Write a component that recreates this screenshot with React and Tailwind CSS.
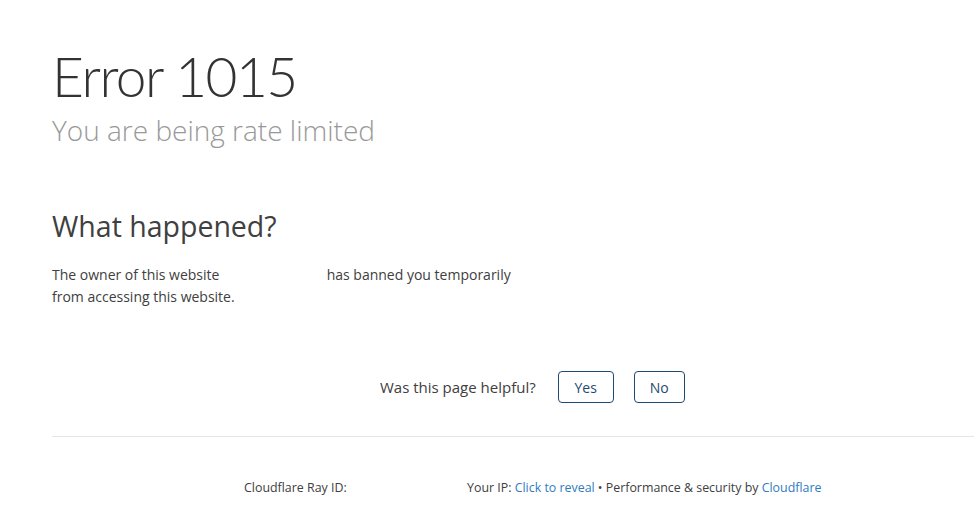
export default function App() {
  return (
    <div className="min-h-screen bg-white text-[#404040]" style={{ fontFamily: '"Open Sans", "Noto Sans", sans-serif' }}>
      {/* Header */}
      <div className="pl-[52px] pt-[40px]">
        <h1 className="text-[55px] leading-[72px] font-light tracking-[-1.5px] text-[#333]" style={{ fontFamily: 'Lato, "Open Sans", sans-serif' }}>
          Error 1015
        </h1>
        <h2 className="text-[28px] leading-[36px] font-light text-[#999]">You are being rate limited</h2>
      </div>

      {/* What happened */}
      <div className="pl-[52px] pt-[58px]">
        <h2 className="text-[28.5px] leading-[40px] font-normal text-[#404040]">What happened?</h2>
        <p className="mt-[18px] text-[14px] leading-[22px] text-[#404040]">
          The owner of this website <span className="inline-block w-[100px]" /> has banned you temporarily
          <br />
          from accessing this website.
        </p>
      </div>

      {/* Feedback */}
      <div className="flex items-center pl-[380px] pt-[63px]">
        <span className="text-[15px] text-[#404040]">Was this page helpful?</span>
        <button className="ml-[22px] h-[32px] w-[56px] rounded-[4px] border border-[#1f4a73] text-[14px] text-[#1f4a73]">Yes</button>
        <button className="ml-[20px] h-[32px] w-[51px] rounded-[4px] border border-[#1f4a73] text-[14px] text-[#1f4a73]">No</button>
      </div>

      <div className="ml-[52px] mt-[33px] h-px bg-[#e5e5e5]" />

      {/* Footer */}
      <div className="flex pt-[42px] text-[12.4px] text-[#404040]">
        <span className="pl-[244px] w-[467px]">Cloudflare Ray ID:</span>
        <span>
          Your IP: <span className="text-[#2f7bbf]">Click to reveal</span> • Performance &amp; security by{' '}
          <span className="text-[#2f7bbf]">Cloudflare</span>
        </span>
      </div>
    </div>
  )
}
